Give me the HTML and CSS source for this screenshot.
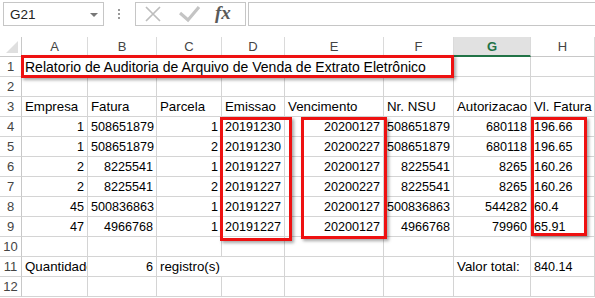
FILE: index.html
```html
<!DOCTYPE html>
<html>
<head>
    <title>Relatorio de Auditoria</title>
    <link rel="stylesheet" href="styles.css">
</head>
<body>
    <div class="toolbar">
        <div class="namebox">
            <span>G21</span>
            <svg class="caret" width="8" height="4" viewBox="0 0 8 4"><polygon points="0,0 8,0 4,4" fill="#777"/></svg>
        </div>
        <div class="grip">
            <svg width="3" height="11" viewBox="0 0 3 11"><rect x="0" y="0" width="2" height="2" fill="#9a9a9a"/><rect x="0" y="4" width="2" height="2" fill="#9a9a9a"/><rect x="0" y="8" width="2" height="2" fill="#9a9a9a"/></svg>
        </div>
        <div class="fx-buttons">
            <svg class="btn-x" width="18" height="18" viewBox="0 0 18 18"><path d="M2 2 L16 16 M16 2 L2 16" stroke="#bdbdbd" stroke-width="1.7" fill="none"/></svg>
            <svg class="btn-ok" width="22" height="18" viewBox="0 0 22 18"><path d="M1 8 L9 15 L20 2" stroke="#c4c4c4" stroke-width="3.2" fill="none"/></svg>
            <span class="fx">fx</span>
        </div>
        <div class="formula"></div>
    </div>

    <div class="sheet">
        <div class="corner"><svg width="12" height="12" viewBox="0 0 12 12"><polygon points="12,0 12,12 0,12" fill="#dfdfdf"/></svg></div>
        <div class="ch">A</div>
        <div class="ch">B</div>
        <div class="ch">C</div>
        <div class="ch">D</div>
        <div class="ch">E</div>
        <div class="ch">F</div>
        <div class="ch active">G</div>
        <div class="ch">H</div>

        <div class="rh">1</div>
        <div class="c wide6 title">Relatorio de Auditoria de Arquivo de Venda de Extrato Eletrônico</div>
        <div class="c"></div>
        <div class="c"></div>

        <div class="rh">2</div>
        <div class="c"></div><div class="c"></div><div class="c"></div><div class="c"></div>
        <div class="c"></div><div class="c"></div><div class="c"></div><div class="c"></div>

        <div class="rh">3</div>
        <div class="c">Empresa</div>
        <div class="c">Fatura</div>
        <div class="c">Parcela</div>
        <div class="c">Emissao</div>
        <div class="c">Vencimento</div>
        <div class="c">Nr. NSU</div>
        <div class="c">Autorizacao</div>
        <div class="c">Vl. Fatura</div>

        <div class="rh">4</div>
        <div class="c n">1</div>
        <div class="c n">508651879</div>
        <div class="c n">1</div>
        <div class="c n">20191230</div>
        <div class="c n">20200127</div>
        <div class="c n">508651879</div>
        <div class="c n">680118</div>
        <div class="c d">196.66</div>

        <div class="rh">5</div>
        <div class="c n">1</div>
        <div class="c n">508651879</div>
        <div class="c n">2</div>
        <div class="c n">20191230</div>
        <div class="c n">20200227</div>
        <div class="c n">508651879</div>
        <div class="c n">680118</div>
        <div class="c d">196.65</div>

        <div class="rh">6</div>
        <div class="c n">2</div>
        <div class="c n">8225541</div>
        <div class="c n">1</div>
        <div class="c n">20191227</div>
        <div class="c n">20200127</div>
        <div class="c n">8225541</div>
        <div class="c n">8265</div>
        <div class="c d">160.26</div>

        <div class="rh">7</div>
        <div class="c n">2</div>
        <div class="c n">8225541</div>
        <div class="c n">2</div>
        <div class="c n">20191227</div>
        <div class="c n">20200227</div>
        <div class="c n">8225541</div>
        <div class="c n">8265</div>
        <div class="c d">160.26</div>

        <div class="rh">8</div>
        <div class="c n">45</div>
        <div class="c n">500836863</div>
        <div class="c n">1</div>
        <div class="c n">20191227</div>
        <div class="c n">20200127</div>
        <div class="c n">500836863</div>
        <div class="c n">544282</div>
        <div class="c d">60.4</div>

        <div class="rh">9</div>
        <div class="c n">47</div>
        <div class="c n">4966768</div>
        <div class="c n">1</div>
        <div class="c n">20191227</div>
        <div class="c n">20200127</div>
        <div class="c n">4966768</div>
        <div class="c n">79960</div>
        <div class="c d">65.91</div>

        <div class="rh">10</div>
        <div class="c"></div><div class="c"></div><div class="c"></div><div class="c"></div>
        <div class="c"></div><div class="c"></div><div class="c"></div><div class="c"></div>

        <div class="rh">11</div>
        <div class="c">Quantidade</div>
        <div class="c n">6</div>
        <div class="c wide2">registro(s)</div>
        <div class="c"></div>
        <div class="c"></div>
        <div class="c">Valor total:</div>
        <div class="c d">840.14</div>

        <div class="rh">12</div>
        <div class="c"></div><div class="c"></div><div class="c"></div><div class="c"></div>
        <div class="c"></div><div class="c"></div><div class="c"></div><div class="c"></div>

        <!-- marcacoes em vermelho por cima da planilha -->
        <div class="mark mark-title"></div>
        <div class="mark mark-emissao"></div>
        <div class="mark mark-venc"></div>
        <div class="mark mark-valor"></div>
    </div>
</body>
</html>
```

FILE: styles.css
```css
body {
    margin: 0;
    background-color: #fff;
    font-family: "Liberation Sans", Arial, sans-serif;
    overflow: hidden;
}

.toolbar {
    display: flex;
    height: 37px;
    padding: 2px 0 0 3px;
    box-sizing: border-box;
}

.namebox {
    width: 101px;
    height: 24px;
    border: 1px solid #c6c6c6;
    box-sizing: border-box;
    display: flex;
    align-items: center;
    justify-content: space-between;
    padding: 0 5px 0 6px;
    font-size: 13.5px;
    color: #222;
}

.caret {
    margin-top: 1px;
}

.grip {
    width: 31px;
    height: 24px;
    display: flex;
    align-items: center;
    justify-content: center;
}

.fx-buttons {
    width: 111px;
    height: 24px;
    border: 1px solid #c6c6c6;
    box-sizing: border-box;
    display: flex;
    align-items: center;
    padding-left: 8px;
}

.btn-x {
    margin-right: 17px;
}

.btn-ok {
    margin-right: 14px;
}

.fx {
    font-family: "Liberation Serif", "Times New Roman", serif;
    font-style: italic;
    font-weight: bold;
    font-size: 19px;
    color: #5a5a5a;
    margin-top: -2px;
}

.formula {
    flex: 1;
    height: 24px;
    margin-left: 2px;
    border: 1px solid #c6c6c6;
    border-right: none;
    box-sizing: border-box;
}

.sheet {
    position: relative;
    display: grid;
    grid-template-columns: 22px 66px 69px 65px 63px 99px 70px 77px 64px;
    grid-auto-rows: 20px;
    font-size: 13.3px;
    color: #000;
}

.sheet > div {
    box-sizing: border-box;
}

.corner {
    border-right: 1px solid #c8c8c8;
    border-bottom: 1px solid #c8c8c8;
    display: flex;
    align-items: flex-end;
    justify-content: flex-end;
    padding: 0 3px 3px 0;
}

.ch {
    border-right: 1px solid #dadada;
    border-bottom: 1px solid #c8c8c8;
    text-align: center;
    line-height: 19px;
    font-size: 13px;
    color: #444;
}

.ch.active {
    background-color: #e1e1e1;
    color: #217346;
    font-weight: bold;
    border-bottom: 2px solid #217346;
}

.rh {
    border-right: 1px solid #c8c8c8;
    border-bottom: 1px solid #d4d4d4;
    text-align: center;
    line-height: 20px;
    font-size: 13px;
    color: #444;
}

.c {
    border-right: 1px solid #d4d4d4;
    border-bottom: 1px solid #d4d4d4;
    padding: 0 3px;
    line-height: 20px;
    white-space: nowrap;
    overflow: hidden;
}

.title {
    font-size: 14px;
}

/* numeros: alinhados a direita e um pouco menores, como no Calibri */
.n {
    text-align: right;
    font-size: 12.6px;
}

.d {
    font-size: 12.6px;
}

.wide6 { grid-column: span 6; }
.wide2 { grid-column: span 2; }

.mark {
    position: absolute;
    border: 3px solid #ee1111;
    box-shadow: 2px 2px 3px rgba(0, 0, 0, 0.35);
    box-sizing: border-box;
}

.mark-title   { left: 21px;  top: 18px; width: 433px; height: 23px; }
.mark-emissao { left: 220px; top: 80px; width: 72px;  height: 124px; }
.mark-venc    { left: 301px; top: 80px; width: 86px;  height: 122px; }
.mark-valor   { left: 531px; top: 80px; width: 56px;  height: 119px; }
```
